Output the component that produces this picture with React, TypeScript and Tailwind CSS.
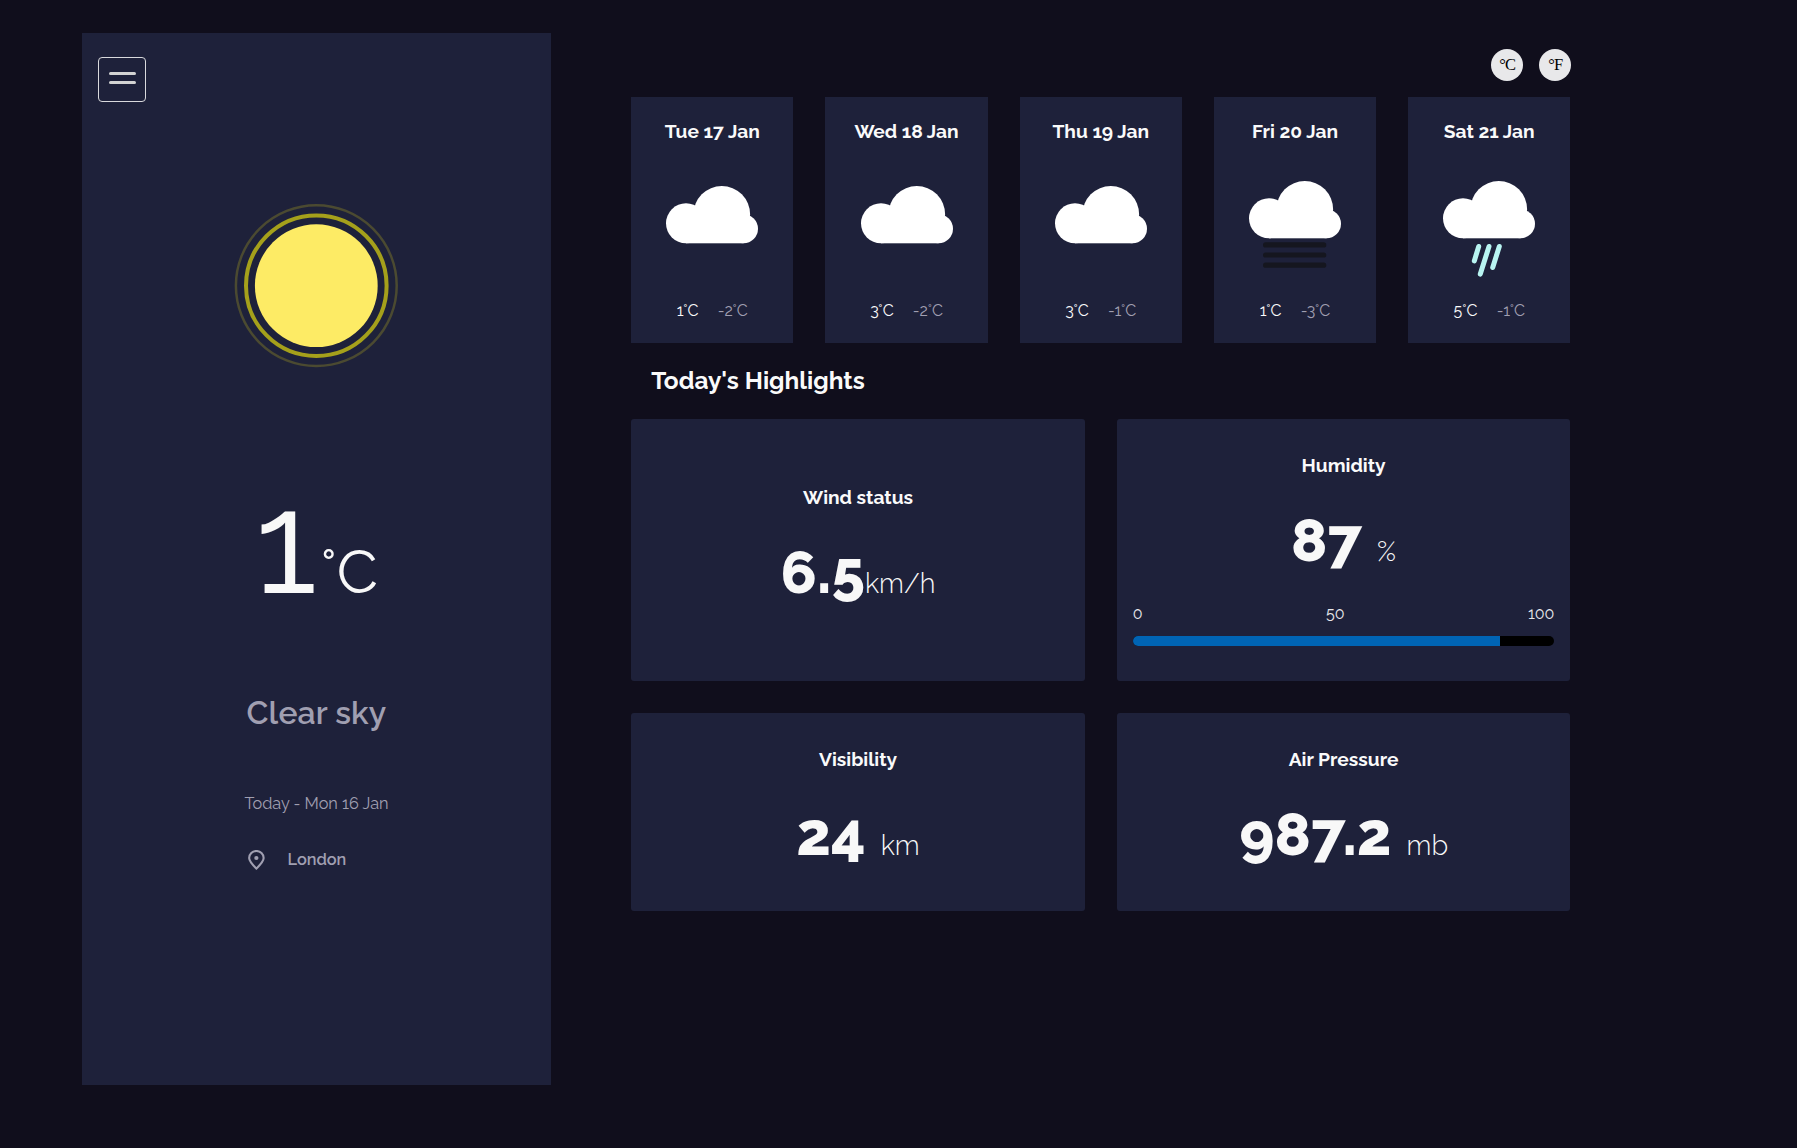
type Sky = "cloud" | "fog" | "rain";

const forecast: { day: string; sky: Sky; max: string; min: string }[] = [
  { day: "Tue 17 Jan", sky: "cloud", max: "1°C", min: "-2°C" },
  { day: "Wed 18 Jan", sky: "cloud", max: "3°C", min: "-2°C" },
  { day: "Thu 19 Jan", sky: "cloud", max: "3°C", min: "-1°C" },
  { day: "Fri 20 Jan", sky: "fog", max: "1°C", min: "-3°C" },
  { day: "Sat 21 Jan", sky: "rain", max: "5°C", min: "-1°C" },
];

function SkyIcon({ sky }: { sky: Sky }) {
  return (
    <svg width="92" height="96" viewBox="0 0 92 96" className="block">
      <g fill="#fff" transform={sky === "cloud" ? "translate(0 5)" : undefined}>
        <circle cx="20" cy="37.3" r="20" />
        <circle cx="55.8" cy="28.3" r="28.3" />
        <circle cx="77.5" cy="42.8" r="14.5" />
        <rect x="20" y="32" width="57.5" height="25.3" />
      </g>
      {sky === "fog" && (
        <g stroke="#15161f" strokeWidth="5.2" strokeLinecap="round">
          <path d="M16.6 63.9H74.7M16.6 74H74.7M16.6 84.2H74.7" />
        </g>
      )}
      {sky === "rain" && (
        <g stroke="#b8f4f1" strokeWidth="5" strokeLinecap="round">
          <path d="M35.7 65.5 31.3 79.9M46 65.5 37.3 93.1M56.3 65.5 49.7 86.5" />
        </g>
      )}
    </svg>
  );
}

function Metric({ title, value, unit, spaced = true }: { title: string; value: string; unit: string; spaced?: boolean }) {
  return (
    <div className="flex flex-col items-center">
      <h3 className="text-[19.2px] font-bold leading-[24px]">{title}</h3>
      <p className="mt-[27px] whitespace-pre text-[60px] font-extrabold leading-[72px] text-[#f8f8f8]">
        {value}
        {spaced ? " " : ""}
        <span className={spaced ? "ml-px text-[27.2px] font-light leading-none" : "text-[27.2px] font-light leading-none"}>{unit}</span>
      </p>
    </div>
  );
}

export default function App() {
  return (
    <div className="flex min-h-[1148px] items-start bg-[#100e1c] pl-[82px] pt-[33px] font-['Raleway','Lato',sans-serif] text-[#fafafa]">
      <aside className="flex h-[1052px] w-[469px] flex-col items-center bg-[#1e213a]">
        <button className="ml-4 mt-6 flex h-[45px] w-12 flex-col items-center gap-[6px] self-start rounded-[4px] border border-[#d9d9dc] pt-[14px]">
          <span className="h-[3px] w-[27px] rounded-full bg-[#d3d3d3]" />
          <span className="h-[3px] w-[27px] rounded-full bg-[#d3d3d3]" />
        </button>
        <svg width="165" height="164" viewBox="0 0 165 164" className="mt-[102px] block">
          <circle cx="82.3" cy="81.7" r="80.4" fill="none" stroke="#4b4a31" strokeWidth="2.5" />
          <circle cx="82.3" cy="81.7" r="70.3" fill="none" stroke="#a5a01b" strokeWidth="4" />
          <circle cx="82.3" cy="81.7" r="61.4" fill="#fdeb65" />
        </svg>
        <p className="mt-[90px] flex items-baseline gap-[4px] text-[144px] leading-[169px] text-[#f8f8f8]">
          1<span className="text-[60px] leading-none">°C</span>
        </p>
        <p className="mt-[66px] text-[32px] font-semibold leading-[40px] tracking-[0.15px] text-[#a09fb1]">Clear sky</p>
        <p className="mt-[61px] text-[16.3px] leading-[20px] text-[#a09fb1]">Today - Mon 16 Jan</p>
        <div className="mt-[35px] flex w-[137px] items-center text-[#a09fb1]">
          <svg width="17" height="20" viewBox="0 0 17 20" className="mt-px block" fill="none" stroke="currentColor" strokeWidth="2.1">
            <path d="M8.4 18.6C4.8 15.1 1.15 11.6 1.15 8.1a7.25 7.1 0 0 1 14.5 0C15.65 11.6 12 15.1 8.4 18.6Z" />
            <circle cx="8.4" cy="8" r="2.1" fill="currentColor" stroke="none" />
          </svg>
          <span className="ml-[22.5px] text-[16.3px] font-semibold leading-[20px]">London</span>
        </div>
      </aside>

      <main className="ml-[80.2px] w-[939.2px] pt-4">
        <div className="-mr-[0.3px] flex justify-end gap-4">
          {["°C", "°F"].map((u) => (
            <button key={u} className="size-8 rounded-full bg-[#e8e8ea] pl-px font-['Liberation_Serif',serif] text-[16.5px] tracking-[-1px] text-black">
              {u}
            </button>
          ))}
        </div>
        <section className="mt-4 grid grid-cols-5 gap-8">
          {forecast.map((f) => (
            <article key={f.day} className="flex h-[246px] flex-col items-center bg-[#1e213a] pt-[22px]">
              <h2 className="text-[19.2px] font-bold leading-[24px]">{f.day}</h2>
              <div className="mt-[38px]">
                <SkyIcon sky={f.sky} />
              </div>
              <p className="mt-6 flex gap-[19.2px] text-[16px] leading-[20px]">
                <span>{f.max}</span>
                <span className="text-[#a09fb1]">{f.min}</span>
              </p>
            </article>
          ))}
        </section>
        <h1 className="ml-5 mt-6 text-[24.4px] font-bold leading-[28px]">Today's Highlights</h1>
        <section className="mt-6 grid grid-cols-2 gap-8">
          <div className="flex h-[262px] flex-col justify-center rounded-[3px] bg-[#1e213a] pb-2">
            <Metric title="Wind status" value="6.5" unit="km/h" spaced={false} />
          </div>
          <div className="h-[262px] rounded-[3px] bg-[#1e213a] px-4 pt-[34px]">
            <Metric title="Humidity" value="87" unit="%" />
            <div className="mt-[28px] flex justify-between text-[16px] leading-[20px] text-[#e7e7eb]">
              <span>0</span>
              <span>50</span>
              <span>100</span>
            </div>
            <div className="mt-3 h-[10px] overflow-hidden rounded-full bg-black">
              <div className="h-full w-[87%] bg-[#0064b4]" />
            </div>
          </div>
          <div className="h-[198px] rounded-[3px] bg-[#1e213a] pt-[34px]">
            <Metric title="Visibility" value="24" unit="km" />
          </div>
          <div className="h-[198px] rounded-[3px] bg-[#1e213a] pt-[34px]">
            <Metric title="Air Pressure" value="987.2" unit="mb" />
          </div>
        </section>
      </main>
    </div>
  );
}
